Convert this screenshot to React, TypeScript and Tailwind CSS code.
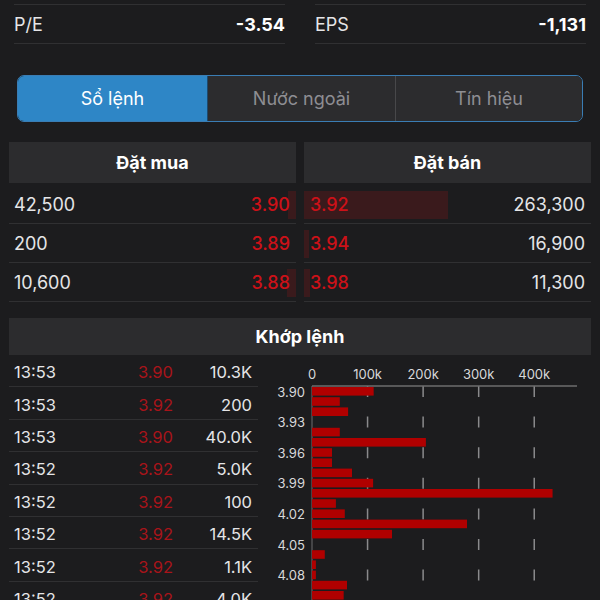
import React from 'react';

const bids = [
  { qty: '42,500', price: '3.90', bar: 8 },
  { qty: '200', price: '3.89', bar: 0 },
  { qty: '10,600', price: '3.88', bar: 9 },
];

const asks = [
  { price: '3.92', qty: '263,300', bar: 144 },
  { price: '3.94', qty: '16,900', bar: 5 },
  { price: '3.98', qty: '11,300', bar: 6 },
];

const trades = [
  ['13:53', '3.90', '10.3K'],
  ['13:53', '3.92', '200'],
  ['13:53', '3.90', '40.0K'],
  ['13:52', '3.92', '5.0K'],
  ['13:52', '3.92', '100'],
  ['13:52', '3.92', '14.5K'],
  ['13:52', '3.92', '1.1K'],
  ['13:52', '3.92', '4.0K'],
];

// volume per price step (k), 3.90 -> 4.10
const volumes = [111, 50, 65, 0, 50, 205, 36, 36, 72, 110, 433, 43, 59, 279, 144, 0, 23, 7, 7, 63, 57, 40, 30];
const priceLabels = ['3.90', '3.93', '3.96', '3.99', '4.02', '4.05', '4.08'];

function StatCell({ label, value }: { label: string; value: string }) {
  return (
    <div className="flex-1 border-t border-b border-[#303032] h-[40px] flex items-center justify-between">
      <span className="text-[18px] text-[#e5e5e7]">{label}</span>
      <span className="text-[18px] font-bold text-white">{value}</span>
    </div>
  );
}

function VolumeChart() {
  const x0 = 50;
  const scale = 0.5556; // px per 1k
  const pitch = 10.2;
  return (
    <svg width="330" height="245" className="block">
      {[0, 100, 200, 300, 400].map(v => (
        <text
          key={v}
          x={x0 + v * scale}
          y={24}
          textAnchor="middle"
          fontSize="13"
          fill="#d8d8da"
          fontFamily="Inter, sans-serif"
        >
          {v === 0 ? '0' : `${v}k`}
        </text>
      ))}
      {[100, 200, 300, 400].map(v => (
        <line
          key={v}
          x1={x0 + v * scale}
          x2={x0 + v * scale}
          y1={31}
          y2={245}
          stroke="#8a8a8c"
          strokeWidth="1.5"
          strokeDasharray="11 19.6"
        />
      ))}
      <line x1={x0} x2={315} y1={31} y2={31} stroke="#6c6c6e" strokeWidth="1.5" />
      <line x1={x0} x2={x0} y1={31} y2={245} stroke="#6c6c6e" strokeWidth="1" />
      {volumes.map((v, i) =>
        v > 0 ? (
          <rect key={i} x={x0} y={32 + i * pitch} width={v * scale} height={8.6} fill="#b00000" />
        ) : null
      )}
      {priceLabels.map((p, i) => (
        <text
          key={p}
          x={43}
          y={41.5 + i * pitch * 3}
          textAnchor="end"
          fontSize="13"
          fill="#d8d8da"
          fontFamily="Inter, sans-serif"
        >
          {p}
        </text>
      ))}
    </svg>
  );
}

export default function App() {
  return (
    <div className="w-[600px] h-[600px] overflow-hidden bg-[#1c1c1e] text-white font-['Inter','Noto_Sans',sans-serif]">
      {/* Stats */}
      <div className="flex gap-[30px] px-[14px] pt-[4px]">
        <StatCell label="P/E" value="-3.54" />
        <StatCell label="EPS" value="-1,131" />
      </div>

      {/* Segmented tabs */}
      <div className="mx-[17px] mt-[31px] h-[47px] rounded-[7px] border border-[#3a7db4] flex overflow-hidden">
        <div className="w-[189px] bg-[#2e86c6] flex items-center justify-center text-[18px] text-white">Sổ lệnh</div>
        <div className="w-[188px] bg-[#2c2c2e] border-l border-[#1e4a6e] flex items-center justify-center text-[18px] text-[#8e8e93]">Nước ngoài</div>
        <div className="flex-1 bg-[#2c2c2e] border-l border-[#48484a] flex items-center justify-center text-[18px] text-[#8e8e93]">Tín hiệu</div>
      </div>

      {/* Order book */}
      <div className="grid grid-cols-2 gap-[8px] px-[9px] mt-[20px]">
        <div>
          <div className="h-[41px] mb-[2px] bg-[#2c2c2e] flex items-center justify-center text-[18px] font-bold">Đặt mua</div>
          {bids.map(b => (
            <div key={b.price} className="relative h-[39px] border-b border-[#303032] flex items-center justify-between pl-[5px] pr-[6px]">
              {b.bar > 0 && <div className="absolute right-0 top-[6px] bottom-[4px] bg-[#3a1a1c]" style={{ width: b.bar }} />}
              <span className="relative text-[18px] text-[#e5e5e7]">{b.qty}</span>
              <span className="relative text-[18px] font-medium text-[#cc1118]">{b.price}</span>
            </div>
          ))}
        </div>
        <div>
          <div className="h-[41px] mb-[2px] bg-[#2c2c2e] flex items-center justify-center text-[18px] font-bold">Đặt bán</div>
          {asks.map(a => (
            <div key={a.price} className="relative h-[39px] border-b border-[#303032] flex items-center justify-between pl-[6px] pr-[6px]">
              <div className="absolute left-0 top-[6px] bottom-[4px] bg-[#3a1a1c]" style={{ width: a.bar }} />
              <span className="relative text-[18px] font-medium text-[#cc1118]">{a.price}</span>
              <span className="relative text-[18px] text-[#e5e5e7]">{a.qty}</span>
            </div>
          ))}
        </div>
      </div>

      {/* Matched orders */}
      <div className="mx-[9px] mt-[16px] h-[37px] bg-[#2c2c2e] flex items-center justify-center text-[18px] font-bold">Khớp lệnh</div>
      <div className="flex">
        <div className="w-[249px] ml-[9px] shrink-0">
          {trades.map((t, i) => (
            <div key={i} className="h-[32.4px] pt-[4px] border-b border-[#303032] flex items-center text-[16.5px]">
              <span className="w-[62px] pl-[5px] text-[#e5e5e7]">{t[0]}</span>
              <span className="w-[102px] text-right text-[#a8141a]">{t[1]}</span>
              <span className="flex-1 text-right pr-[6px] text-[#e5e5e7]">{t[2]}</span>
            </div>
          ))}
        </div>
        <div className="ml-[4px]">
          <VolumeChart />
        </div>
      </div>
    </div>
  );
}
